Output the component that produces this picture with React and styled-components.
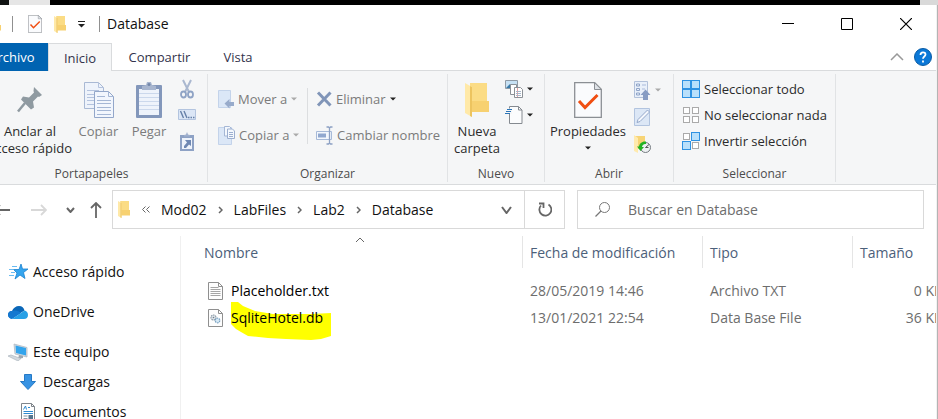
import React from 'react';
import styled, { createGlobalStyle, css } from 'styled-components';

const GlobalStyle = createGlobalStyle`
  * { box-sizing: border-box; }
  html, body { margin: 0; background: #fff; overflow: hidden; }
  body, button, input, table {
    font-family: "Open Sans", "Noto Sans", sans-serif;
    font-size: 14px;
    line-height: 18px;
    color: #1a1a1a;
  }
  button { margin: 0; padding: 0; border: 0; background: none; cursor: default; white-space: nowrap; }
  svg { display: block; flex: none; }
`;

const Screen = styled.div`
  height: 100vh;
  display: flex;
  flex-direction: column;
  overflow: hidden;
`;

const Backdrop = styled.div`
  flex: none;
  height: 5px;
  display: flex;
  background: #000;
`;

const BackdropPiece = styled.span`
  width: ${(p) => p.$w}px;
  background: ${(p) => p.$color};
  margin-left: ${(p) => (p.$end ? 'auto' : 0)};
`;

const Desktop = styled.div`
  flex: 1;
  min-height: 0;
  display: flex;
`;

/* The window runs past the left side of the screen. */
const Window = styled.div`
  flex: 1;
  min-width: 0;
  margin-left: -24px;
  display: flex;
  flex-direction: column;
  overflow: hidden;
  background: #fff;
`;

const WindowEdge = styled.div`
  width: 2px;
  background: #f2f2f2;
  border-right: 1px solid #b4b4b4;
`;

const TitleBar = styled.header`
  height: 38px;
  flex: none;
  display: flex;
  align-items: center;
  padding: 0 1px 0 13px;
`;

const QuickAccess = styled.div`
  display: flex;
  align-items: center;
`;

const QuickButton = styled.button`
  width: ${(p) => p.$w}px;
  height: 24px;
  display: flex;
  align-items: center;
  justify-content: ${(p) => (p.$start ? 'flex-start' : 'center')};
`;

const TitleRule = styled.span`
  width: 1px;
  height: 16px;
  background: #909090;
`;

const Title = styled.h1`
  margin: 0;
  flex: 1;
  padding-left: 7px;
  font-size: 14px;
  font-weight: 400;
  color: #111;
`;

const WindowButton = styled.button`
  width: 59px;
  height: 38px;
  display: flex;
  align-items: center;
  justify-content: center;
`;

const TabBar = styled.nav`
  height: 28px;
  flex: none;
  display: flex;
  padding-right: 4px;
  box-shadow: inset 0 -1px #d9dbdd;
`;

const Tab = styled.button`
  width: ${(p) => p.$w}px;
  font-size: 13px;
  color: #33334c;
  ${(p) => p.$kind === 'file' && css`background: #0063b1; color: #fff;`}
  ${(p) => p.$kind === 'active' && css`
    background: #f5f6f7;
    border: 1px solid #d9dbdd;
    border-bottom: 0;
  `}
`;

const TabTools = styled.div`
  margin-left: auto;
  display: flex;
  align-items: center;
  gap: 10px;
`;

const Ribbon = styled.section`
  height: 114px;
  flex: none;
  display: flex;
  padding: 3px 0 2px;
  background: #f5f6f7;
  border-bottom: 1px solid #d9dbdd;
`;

const Group = styled.div`
  flex: 0 0 ${(p) => p.$w}px;
  display: flex;
  flex-direction: column;
  border-right: 1px solid #e1e3e5;
  font-size: 13px;
`;

const GroupTools = styled.div`
  flex: 1;
  display: flex;
  align-items: flex-start;
  padding: 2px 0 0 ${(p) => p.$left || 0}px;
`;

const GroupLabel = styled.div`
  height: 16px;
  line-height: 16px;
  text-align: center;
  font-size: 12px;
  color: #4c4c4c;
`;

const BigButton = styled.button`
  width: ${(p) => p.$w}px;
  display: flex;
  flex-direction: column;
  align-items: center;
  font-size: 13px;
  line-height: 17px;
  color: ${(p) => (p.$off ? '#7b7b7b' : '#2b2b2b')};
`;

const BigIcon = styled.span`
  height: 47px;
  display: flex;
  align-items: center;
`;

const ButtonCaret = styled.span`
  height: 16px;
  display: flex;
  align-items: center;
`;

const Stack = styled.div`
  flex: 0 0 ${(p) => (p.$w ? `${p.$w}px` : 'auto')};
  display: flex;
  flex-direction: column;
  padding: ${(p) => p.$top || 0}px 0 0 ${(p) => p.$left || 0}px;
`;

const ToolButton = styled.button`
  height: ${(p) => p.$h || 26}px;
  display: flex;
  align-items: center;
  gap: 4px;
  font-size: 13px;
  color: ${(p) => (p.$off ? '#7b7b7b' : '#2b2b2b')};
`;

const ToolRule = styled.span`
  width: 1px;
  height: 56px;
  margin: 12px 8px 0 0;
  background: #dcdee0;
`;

const AddressRow = styled.div`
  height: 51px;
  flex: none;
  display: flex;
  align-items: flex-start;
  padding: 5px 12px 0 16px;
`;

const NavButton = styled.button`
  width: ${(p) => p.$w}px;
  height: 39px;
  display: flex;
  align-items: center;
  justify-content: center;
`;

const History = styled.div`
  display: flex;
  margin-right: 6px;
`;

const AddressBox = styled.div`
  flex: 446 1 0;
  height: 39px;
  display: flex;
  align-items: center;
  border: 1px solid #d9d9d9;
  padding-left: 5px;
  margin-right: 12px;
`;

const Crumbs = styled.div`
  flex: 1;
  display: flex;
  align-items: center;
  gap: 11px;
`;

const Crumb = styled.button`
  color: #111;
`;

const RefreshButton = styled.button`
  width: 40px;
  height: 37px;
  display: flex;
  align-items: center;
  justify-content: center;
  border-left: 1px solid #d9d9d9;
`;

const SearchBox = styled.label`
  flex: 328 1 0;
  height: 39px;
  display: flex;
  align-items: center;
  gap: 18px;
  padding-left: 17px;
  border: 1px solid #d9d9d9;
`;

const SearchInput = styled.input`
  flex: 1;
  min-width: 0;
  border: 0;
  padding: 0;
  outline: 0;
  background: none;
  &::placeholder { color: #6d6d6d; opacity: 1; }
`;

const Body = styled.div`
  flex: 1;
  min-height: 0;
  display: flex;
`;

const NavPane = styled.aside`
  flex: 0 0 205px;
  display: flex;
  flex-direction: column;
  gap: 10px;
  padding: 21px 0 0 32px;
  border-right: 1px solid #f0f0f0;
  overflow: hidden;
`;

const NavItem = styled.a`
  height: 30px;
  display: flex;
  align-items: center;
  gap: 5px;
  padding-left: ${(p) => (p.$child ? 10 : 0)}px;
  color: #111;
  text-decoration: none;
  white-space: nowrap;
`;

const FilePane = styled.main`
  flex: 1;
  min-width: 0;
  overflow: hidden;
`;

/* The last column reaches beyond the visible part of the pane. */
const FileTable = styled.table`
  width: calc(100% + 17px);
  table-layout: fixed;
  border-collapse: separate;
  border-spacing: 0;
  white-space: nowrap;
`;

const Col = styled.col`
  width: ${(p) => (p.$w ? `${p.$w}px` : 'auto')};
`;

const HeadCell = styled.th`
  position: relative;
  height: 32px;
  padding: 2px 0 0 ${(p) => (p.$first ? 23 : 7)}px;
  border-right: 1px solid #e5e5e5;
  text-align: left;
  font-weight: 400;
  button { color: #4c607a; }
`;

const SortMark = styled.span`
  position: absolute;
  top: 1px;
  left: calc(50% + 3px);
`;

const Rows = styled.tbody`
  &::before { content: ""; display: block; height: 9px; }
`;

const Cell = styled.td`
  height: 27px;
  padding: 0 10px 0 7px;
  color: #6d6d6d;
  text-align: ${(p) => (p.$right ? 'right' : 'left')};
`;

const NameCell = styled.td`
  height: 27px;
  padding: 0 0 0 27px;
`;

const FileName = styled.span`
  display: flex;
  align-items: center;
  gap: 8px;
  color: #000;
`;

const NameText = styled.span`
  position: relative;
`;

const Marker = styled.svg`
  position: absolute;
  left: 0;
  top: -7px;
  z-index: -1;
`;

const FileTableLayer = styled.div`
  position: relative;
  z-index: 0;
`;

const IconBox = styled.span`
  flex: none;
  width: ${(p) => p.$w || 18}px;
  display: flex;
  justify-content: center;
`;

const Svg = ({ w, h, children, ...rest }) => (
  <svg width={w} height={h} viewBox={`0 0 ${w} ${h}`} fill="none" aria-hidden="true" {...rest}>{children}</svg>
);

const Caret = ({ color = '#222' }) => <Svg w={6} h={4}><path d="M0 .5h6L3 3.5z" fill={color} /></Svg>;

const Folder = ({ w = 12, h = 17 }) => (
  <svg width={w} height={h} viewBox="0 0 24 34" preserveAspectRatio="none" aria-hidden="true">
    <path d="M5 0h17v18h2v11H5z" fill="#f7d171" />
    <path d="M5 0h17v18H5z" fill="#fbdc85" />
    <path d="M0 0l7 4v30l-7-4z" fill="#ffe9a8" />
    <path d="M7 4v30l-2-1V3z" fill="#edc45f" />
  </svg>
);

const CheckPage = ({ w, h }) => (
  <svg width={w} height={h} viewBox="0 0 28 36" preserveAspectRatio="none" fill="none" aria-hidden="true">
    <path d="M.7.7h20l6.600 6.600v28H.7z" fill="#fafbfd" stroke="#8b8f94" strokeWidth="1.300" />
    <path d="M20.500.7v6.800h6.800z" fill="#dfe3e8" stroke="#8b8f94" />
    <path d="M5 19l6 6.500L23.500 13" stroke="#f04e12" strokeWidth="3" />
  </svg>
);

const Pin = () => (
  <Svg w={26} h={28}>
    <path d="M17 1l8 8-3 2-1-.5-5 5 1 6-3 2-10-10 2-3 6 1 5-5-.5-1.500z" fill="#8f9aa1" />
    <path d="M8 17L1 25.500" stroke="#8f9aa1" strokeWidth="2.500" />
  </Svg>
);

const CopyIcon = () => (
  <Svg w={30} h={36}>
    <path d="M.5.5h14l5 5v21H.5z" fill="#eef3fb" stroke="#a9b9d4" />
    <path d="M14.500.5v5h5M3 8.500h12M3 12.500h7M3 15.500h7M3 18.500h7M3 22.500h7" stroke="#b4c3de" />
    <path d="M10.500 9.500h14l5 5v21h-19z" fill="#f2f6fd" stroke="#93a7ca" />
    <path d="M24.500 9.500v5h5M13 14.500h8M13 18.500h14M13 21.500h14M13 25.500h14M13 28.500h14M13 32.500h14" stroke="#a5b7d5" />
  </Svg>
);

const PasteIcon = () => (
  <Svg w={26} h={37}>
    <rect y="4" width="26" height="33" rx="1" fill="#8397bb" />
    <path d="M3 8h20v26H3z" fill="#eef3fb" />
    <path d="M3 12.500h20M3 16.500h20M3 20.500h20M3 24.500h20M3 28.500h20" stroke="#cbd8ec" />
    <path d="M6 9V5l4-1 1-3h4l1 3 4 1v4z" fill="#a8b6cf" />
    <circle cx="13" cy="3.500" r="1.500" fill="#7387aa" />
  </Svg>
);

const Cut = () => (
  <Svg w={14} h={20}>
    <path d="M3 1l6 12M11 1L5 13" stroke="#aab8d0" strokeWidth="2" />
    <ellipse cx="3.500" cy="15.500" rx="2.500" ry="3" stroke="#8fa3c5" strokeWidth="1.800" />
    <ellipse cx="10.500" cy="15.500" rx="2.500" ry="3" stroke="#8fa3c5" strokeWidth="1.800" />
  </Svg>
);

const CopyPath = () => (
  <Svg w={18} h={12}>
    <path d="M.5.5h17v10H.5z" fill="#dbe6f6" stroke="#b3c4df" />
    <path d="M2.500 2l3 7M6 2l3 7M10 8.500h1.500M12.500 8.500H14M15 8.500h1.500" stroke="#6680a8" strokeWidth="1.400" />
  </Svg>
);

const PasteShortcut = () => (
  <Svg w={14} h={19}>
    <path d="M0 3h14v16H0z" fill="#8ea2c5" />
    <path d="M2 6h10v11H2z" fill="#eef3fb" />
    <path d="M4 4.500V3l2-.5L7 0l1 2.500 2 .5v1.500z" fill="#9fb0cd" />
    <path d="M5 8h6v6L9 12.500 6 16H4v-2l3-3.500z" fill="#6f88b3" />
  </Svg>
);

const MoveTo = () => (
  <Svg w={16} h={19}>
    <path d="M.5.5h12v17H.5z" fill="#dbe7f7" stroke="#c3d3ea" />
    <path d="M6.500 13.500l5-4.500v3H16v4h-4.500v2.500z" fill="#98abcb" />
  </Svg>
);

const CopyTo = () => (
  <Svg w={17} h={19}>
    <path d="M.5 1.500h13v17H.5z" fill="#dbe7f7" stroke="#c3d3ea" />
    <path d="M6.500.5h5l1.500 1.500v8H6.500z" fill="#f4f8fd" stroke="#a5b7d5" />
    <path d="M9.500 3h5l2 2v7.500h-7z" fill="#f4f8fd" stroke="#9cafd0" />
    <path d="M11 6.500h4M11 8.500h4M11 10.500h4" stroke="#9cafd0" />
  </Svg>
);

const DeleteX = () => <Svg w={16} h={16}><path d="M2 1.500l12.500 13M14.500 1.500L2 14.500" stroke="#8095b8" strokeWidth="3" /></Svg>;

const Rename = () => (
  <Svg w={17} h={19}>
    <path d="M.5 5.500h15v8H.5z" fill="#f3f7fd" stroke="#a7bad8" />
    <path d="M2 7.500h8v4H2z" fill="#91a8cf" />
    <path d="M10.500 1h2l1 1 1-1h2M13.500 2v15M10.500 18h2l1-1 1 1h2" stroke="#8da1c4" strokeWidth="1.300" />
  </Svg>
);

const NewItem = () => (
  <Svg w={18} h={18}>
    <path d="M.5.5h12v8H.5z" fill="#c7e1f4" stroke="#8f9aa5" />
    <path d="M1 8l4-4 4 4z" fill="#397aa8" />
    <path d="M5.500 4.500h6v10h-6z" fill="#fff" stroke="#8b9096" />
    <path d="M9.500 7.500h6l2 2v8h-8z" fill="#fff" stroke="#8b9096" />
    <path d="M12.500 8v9" stroke="#e8a0a0" /><path d="M11 11.500h5M11 13.500h5M11 15.500h5" stroke="#a7b6c8" />
  </Svg>
);

const EasyAccess = () => (
  <Svg w={18} h={18}>
    <path d="M4.500.5h9l3.500 3.500v13.500H4.500z" fill="#fbfcfd" stroke="#858a90" />
    <path d="M13.500.5V4H17" stroke="#858a90" />
    <path d="M0 2.500h7V8H0z" fill="#f5f6f7" />
    <path d="M2 3.500h5M1 5.500h5M0 7.500h5" stroke="#2b75b8" strokeWidth="1.200" />
  </Svg>
);

const OpenWith = () => (
  <Svg w={17} h={19}>
    <path d="M.5.5h13v16H.5z" fill="#e9f0fa" stroke="#b2c1da" />
    <path d="M2.500 3h3v2h-3zM2.500 7.500h3v2h-3zM2.500 12h3v2h-3z" stroke="#8fa4c8" />
    <path d="M8 4h4M8 8h3" stroke="#a9badb" />
    <path d="M11.500 8.500L16.500 14H14v5H9v-5H6.500z" fill="#879cc3" />
  </Svg>
);

const EditIcon = () => (
  <Svg w={17} h={18}>
    <path d="M.5.5h15v17H.5z" fill="#dce7f6" stroke="#b2c4df" />
    <path d="M3 14.500l1-3L13.500 2l2 2L6 13.500z" fill="#f5f8fd" stroke="#93a7ca" />
  </Svg>
);

const HistoryIcon = () => (
  <Svg w={17} h={19}>
    <path d="M0 1h11v13H0z" fill="#f7d476" /><path d="M0 0l4 3v15l-4-2z" fill="#ffeaae" />
    <circle cx="11.500" cy="12.500" r="5" fill="#eef1f3" stroke="#747b80" />
    <path d="M11.500 12.500L15 9.500M11.500 12.500h3" stroke="#555" />
    <path d="M12 6.500c-4-.5-6.500 2-7 5H3l3.500 4.500L10 12H8c0-2 2-3.500 4-3z" fill="#24b324" />
  </Svg>
);

const tileColors = { on: ['#b9e0fb', '#2f92e2'], off: ['#fff', '#aaa'] };
const SelectTiles = ({ tiles }) => (
  <Svg w={18} h={18}>
    {tiles.map((on, i) => {
      const [fill, stroke] = tileColors[on ? 'on' : 'off'];
      const inset = on ? 0.5 : 1.5;
      return <rect key={i} x={(i % 2) * 9 + inset} y={Math.floor(i / 2) * 9 + inset} width={9 - inset * 2} height={9 - inset * 2} fill={fill} stroke={stroke} />;
    })}
  </Svg>
);

const Chevron = ({ dir = 'down', color = '#666', w = 10, h = 6, stroke = 2 }) => {
  const d = dir === 'down' ? `M1 1L${w / 2} ${h - 1}L${w - 1} 1`
    : dir === 'up' ? `M1 ${h - 1}L${w / 2} 1L${w - 1} ${h - 1}`
      : `M1 1L${w - 1} ${h / 2}L1 ${h - 1}`;
  return <Svg w={w} h={h}><path d={d} stroke={color} strokeWidth={stroke} /></Svg>;
};

const Arrow = ({ dir, color }) => (
  <Svg w={16} h={16} transform={dir === 'left' ? 'scale(-1 1)' : dir === 'up' ? 'rotate(-90)' : undefined}>
    <path d="M0 8h15M10 3l5 5-5 5" stroke={color} strokeWidth="1.800" />
  </Svg>
);

const StarIcon = () => (
  <Svg w={19} h={18}>
    <path d="M12 1l1.500 5H19l-4.500 3.500L16 15.500l-5-3.500-5 4 2-6-3.500-3.500H10z" fill="#35a5ee" stroke="#1b82cf" strokeWidth=".8" />
    <path d="M3 3.500h5M0 6.500h4M2 9.500h4M0 12.500h5" stroke="#6abcf2" />
  </Svg>
);

const CloudIcon = () => (
  <Svg w={20} h={13}>
    <path d="M5 12C2 13 0 11 0 8.500S2 5 4 5c1-3 4-5 7-5s5 2 5.500 4.500z" fill="#0b67b8" />
    <path d="M4 5c-2 0-4 1.500-4 4 0 2 2 4 4 4l9-6C11 5 7 3.500 4 5z" fill="#1478d0" />
    <path d="M4 13l9-6 3.500-2.500C18.500 5 20 6.500 20 9s-1.500 4-4 4z" fill="#28a0e6" />
  </Svg>
);

const ComputerIcon = () => (
  <Svg w={20} h={18}>
    <path d="M6 1l13 3.500V14L7 11z" fill="#d6dce2" stroke="#a9b3bd" strokeWidth=".7" />
    <path d="M7.500 2.500L18 5v7.500L8 10z" fill="#33a4ec" />
    <path d="M11 12l4 1v2l-5 1z" fill="#9ba7b1" />
    <path d="M0 13l3-1 10 3.500L10 18z" fill="#d3d9df" stroke="#a5afb8" strokeWidth=".6" />
  </Svg>
);

const DownloadIcon = () => (
  <Svg w={16} h={16}><path d="M4.500.5h7v7h4L8 15.500.5 7.500h4z" fill="#3793e3" stroke="#2579c6" /></Svg>
);

const DocumentIcon = () => (
  <Svg w={16} h={19}>
    <path d="M1.500.5h10l3 3v15h-13z" fill="#fff" stroke="#7f858b" />
    <path d="M11.500.5v3h3" stroke="#7f858b" />
    <path d="M3.500 6.500L5.500 3l1 3.500M8 4.500h2M3.500 8.500H13M3.500 10.500H13" stroke="#2f8ad0" />
    <path d="M3.500 13h4M3.500 15.500h4" stroke="#8793a0" /><path d="M8.500 12H13v4H8.500z" fill="#55738c" />
  </Svg>
);

const TextFile = () => (
  <Svg w={15} h={18}>
    <path d="M.5.5h10l4 4v13H.5z" fill="#fdfdfd" stroke="#8f8f8f" /><path d="M10.500.5v4h4" stroke="#8f8f8f" />
    <path d="M2.500 5.500h8M2.500 7.500h10M2.500 9.500h10M2.500 11.500h10M2.500 13.500h10" stroke="#a5a5a5" />
  </Svg>
);

const DbFile = () => (
  <Svg w={15} h={18}>
    <path d="M.5.5h10l4 4v13H.5z" fill="#fdfdfd" stroke="#8f8f8f" /><path d="M10.500.5v4h4" stroke="#8f8f8f" />
    <circle cx="5.500" cy="8.500" r="2.500" fill="#dfe5ea" stroke="#8a98a5" strokeWidth="1.200" strokeDasharray="1.500 .7" />
    <circle cx="5.500" cy="8.500" r=".8" fill="#71808e" />
    <circle cx="9.500" cy="11.500" r="2.300" fill="#d5e8f5" stroke="#78a1c0" strokeWidth="1.200" strokeDasharray="1.500 .7" />
  </Svg>
);

const files = [
  { name: 'Placeholder.txt', icon: <TextFile />, date: '28/05/2019 14:46', type: 'Archivo TXT', size: '0 KB' },
  { name: 'SqliteHotel.db', icon: <DbFile />, date: '13/01/2021 22:54', type: 'Data Base File', size: '36 KB', marked: true },
];

const navGroups = [
  [{ label: 'Acceso rápido', icon: <StarIcon /> }],
  [{ label: 'OneDrive', icon: <CloudIcon /> }],
  [
    { label: 'Este equipo', icon: <ComputerIcon /> },
    { label: 'Descargas', icon: <DownloadIcon />, child: true },
    { label: 'Documentos', icon: <DocumentIcon />, child: true },
  ],
];

const path = ['Mod02', 'LabFiles', 'Lab2', 'Database'];

export default function App() {
  return (
    <Screen>
      <GlobalStyle />
      <Backdrop>
        <BackdropPiece $w={9} $color="#101312" />
        <BackdropPiece $w={41} $color="#e6e6e6" />
        <BackdropPiece $w={18} $color="#d9d9d9" $end />
      </Backdrop>
      <Desktop>
        <Window>
          <TitleBar>
            <QuickAccess>
              <QuickButton $w={23} $start aria-label="Explorador"><Folder /></QuickButton>
              <TitleRule />
              <QuickButton $w={44} aria-label="Propiedades"><CheckPage w={14} h={18} /></QuickButton>
              <QuickButton $w={6} aria-label="Nueva carpeta"><Folder /></QuickButton>
              <QuickButton $w={36} aria-label="Personalizar">
                <Svg w={7} h={7}><path d="M0 .5h7" stroke="#222" /><path d="M0 3h7L3.500 6.500z" fill="#222" /></Svg>
              </QuickButton>
              <TitleRule />
            </QuickAccess>
            <Title>Database</Title>
            <WindowButton aria-label="Minimizar"><Svg w={12} h={12}><path d="M0 5.500h12" stroke="#000" /></Svg></WindowButton>
            <WindowButton aria-label="Maximizar"><Svg w={12} h={12}><path d="M.5.5h11v11H.5z" stroke="#000" /></Svg></WindowButton>
            <WindowButton aria-label="Cerrar"><Svg w={12} h={12}><path d="M0 0l12 12M12 0L0 12" stroke="#000" strokeWidth="1.200" /></Svg></WindowButton>
          </TitleBar>

          <TabBar>
            <Tab $w={72} $kind="file">Archivo</Tab>
            <Tab $w={64} $kind="active">Inicio</Tab>
            <Tab $w={95}>Compartir</Tab>
            <Tab $w={62}>Vista</Tab>
            <TabTools>
              <button aria-label="Minimizar la cinta"><Chevron dir="up" w={14} h={8} color="#999" stroke={1.5} /></button>
              <button aria-label="Ayuda">
                <Svg w={18} h={18}>
                  <circle cx="9" cy="9" r="8.500" fill="#0b78d7" stroke="#0a5ca5" />
                  <path d="M6.500 7c0-3.500 5-3.500 5-.5 0 2-2.500 2-2.500 4.300M9 12.500v2" stroke="#fff" strokeWidth="1.800" />
                </Svg>
              </button>
            </TabTools>
          </TabBar>

          <Ribbon>
            <Group $w={232}>
              <GroupTools $left={12}>
                <BigButton $w={84}><BigIcon><Pin /></BigIcon>Anclar al<br />acceso rápido</BigButton>
                <BigButton $w={53} $off><BigIcon><CopyIcon /></BigIcon>Copiar</BigButton>
                <BigButton $w={48} $off><BigIcon><PasteIcon /></BigIcon>Pegar</BigButton>
                <Stack $left={5}>
                  <ToolButton aria-label="Cortar"><IconBox><Cut /></IconBox></ToolButton>
                  <ToolButton aria-label="Copiar ruta de acceso"><IconBox><CopyPath /></IconBox></ToolButton>
                  <ToolButton aria-label="Pegar acceso directo"><IconBox><PasteShortcut /></IconBox></ToolButton>
                </Stack>
              </GroupTools>
              <GroupLabel>Portapapeles</GroupLabel>
            </Group>

            <Group $w={240}>
              <GroupTools $left={10}>
                <Stack $w={89} $top={5}>
                  <ToolButton $h={36} $off><MoveTo />Mover a <Caret color="#aaa" /></ToolButton>
                  <ToolButton $h={36} $off><CopyTo />Copiar a <Caret color="#aaa" /></ToolButton>
                </Stack>
                <ToolRule />
                <Stack $top={5}>
                  <ToolButton $h={36} $off><DeleteX />Eliminar <Caret /></ToolButton>
                  <ToolButton $h={36} $off><Rename />Cambiar nombre</ToolButton>
                </Stack>
              </GroupTools>
              <GroupLabel>Organizar</GroupLabel>
            </Group>

            <Group $w={97}>
              <GroupTools $left={2}>
                <BigButton $w={54}><BigIcon><Folder w={24} h={34} /></BigIcon>Nueva<br />carpeta</BigButton>
                <Stack $left={1}>
                  <ToolButton aria-label="Nuevo elemento"><IconBox><NewItem /></IconBox><Caret /></ToolButton>
                  <ToolButton aria-label="Fácil acceso"><IconBox><EasyAccess /></IconBox><Caret /></ToolButton>
                </Stack>
              </GroupTools>
              <GroupLabel>Nuevo</GroupLabel>
            </Group>

            <Group $w={129}>
              <GroupTools $left={2}>
                <BigButton $w={82}><BigIcon><CheckPage w={28} h={36} /></BigIcon>Propiedades<ButtonCaret><Caret /></ButtonCaret></BigButton>
                <Stack $left={4}>
                  <ToolButton aria-label="Abrir" $h={28}><IconBox><OpenWith /></IconBox><Caret color="#aaa" /></ToolButton>
                  <ToolButton aria-label="Editar"><IconBox><EditIcon /></IconBox></ToolButton>
                  <ToolButton aria-label="Historial" $h={28}><IconBox><HistoryIcon /></IconBox></ToolButton>
                </Stack>
              </GroupTools>
              <GroupLabel>Abrir</GroupLabel>
            </Group>

            <Group $w={162}>
              <GroupTools $left={8}>
                <Stack>
                  <ToolButton><SelectTiles tiles={[1, 1, 1, 1]} />Seleccionar todo</ToolButton>
                  <ToolButton><SelectTiles tiles={[0, 0, 0, 0]} />No seleccionar nada</ToolButton>
                  <ToolButton><SelectTiles tiles={[0, 1, 1, 0]} />Invertir selección</ToolButton>
                </Stack>
              </GroupTools>
              <GroupLabel>Seleccionar</GroupLabel>
            </Group>
          </Ribbon>

          <AddressRow>
            <History>
              <NavButton $w={20} aria-label="Atrás"><Arrow dir="left" color="#666" /></NavButton>
              <NavButton $w={54} aria-label="Adelante"><Arrow dir="right" color="#d8d8d8" /></NavButton>
              <NavButton $w={8} aria-label="Recientes"><Chevron w={9} h={6} /></NavButton>
            </History>
            <NavButton $w={32} aria-label="Subir"><Arrow dir="up" color="#666" /></NavButton>
            <AddressBox>
              <Crumbs>
                <Folder />
                <Svg w={9} h={7}><path d="M4.500.5l-3 3 3 3M8.500.5l-3 3 3 3" stroke="#666" /></Svg>
                {path.map((part, i) => (
                  <React.Fragment key={part}>
                    {i > 0 && <Chevron dir="right" w={5} h={8} stroke={1.5} />}
                    <Crumb>{part}</Crumb>
                  </React.Fragment>
                ))}
              </Crumbs>
              <NavButton $w={36} aria-label="Historial de direcciones"><Chevron w={11} h={8} /></NavButton>
              <RefreshButton aria-label="Actualizar">
                <Svg w={14} h={15}><path d="M10.500 2.500A6 6 0 1 1 3 3.500M1 1.500h4.500V6" stroke="#666" strokeWidth="1.800" /></Svg>
              </RefreshButton>
            </AddressBox>
            <SearchBox>
              <Svg w={15} h={15}><circle cx="9.500" cy="5.500" r="5" stroke="#777" /><path d="M6 9L.5 14.500" stroke="#777" strokeWidth="1.200" /></Svg>
              <SearchInput type="text" placeholder="Buscar en Database" aria-label="Buscar en Database" />
            </SearchBox>
          </AddressRow>

          <Body>
            <NavPane>
              {navGroups.map((group) => (
                <div key={group[0].label}>
                  {group.map((item) => (
                    <NavItem key={item.label} href="#" $child={item.child}>
                      <IconBox $w={20}>{item.icon}</IconBox>{item.label}
                    </NavItem>
                  ))}
                </div>
              ))}
            </NavPane>
            <FilePane>
              <FileTableLayer>
                <FileTable>
                  <colgroup><Col /><Col $w={180} /><Col $w={150} /><Col $w={100} /></colgroup>
                  <thead>
                    <tr>
                      <HeadCell $first>
                        <button>Nombre</button>
                        <SortMark><Chevron dir="up" w={10} h={6} stroke={1} /></SortMark>
                      </HeadCell>
                      <HeadCell><button>Fecha de modificación</button></HeadCell>
                      <HeadCell><button>Tipo</button></HeadCell>
                      <HeadCell><button>Tamaño</button></HeadCell>
                    </tr>
                  </thead>
                  <Rows>
                    {files.map((file) => (
                      <tr key={file.name}>
                        <NameCell>
                          <FileName>
                            {file.icon}
                            <NameText>
                              {file.marked && (
                                <Marker width="100" height="38" viewBox="0 0 100 38" aria-hidden="true">
                                  <path d="M0 0h7l5 4 12 5 18 3 20 0 18 0 20-1v23l-10 3-10 1-25-1-18-1-20-2-7-4-5-3-5-5z" fill="#ff0" />
                                </Marker>
                              )}
                              {file.name}
                            </NameText>
                          </FileName>
                        </NameCell>
                        <Cell>{file.date}</Cell>
                        <Cell>{file.type}</Cell>
                        <Cell $right>{file.size}</Cell>
                      </tr>
                    ))}
                  </Rows>
                </FileTable>
              </FileTableLayer>
            </FilePane>
          </Body>
        </Window>
        <WindowEdge />
      </Desktop>
    </Screen>
  );
}
